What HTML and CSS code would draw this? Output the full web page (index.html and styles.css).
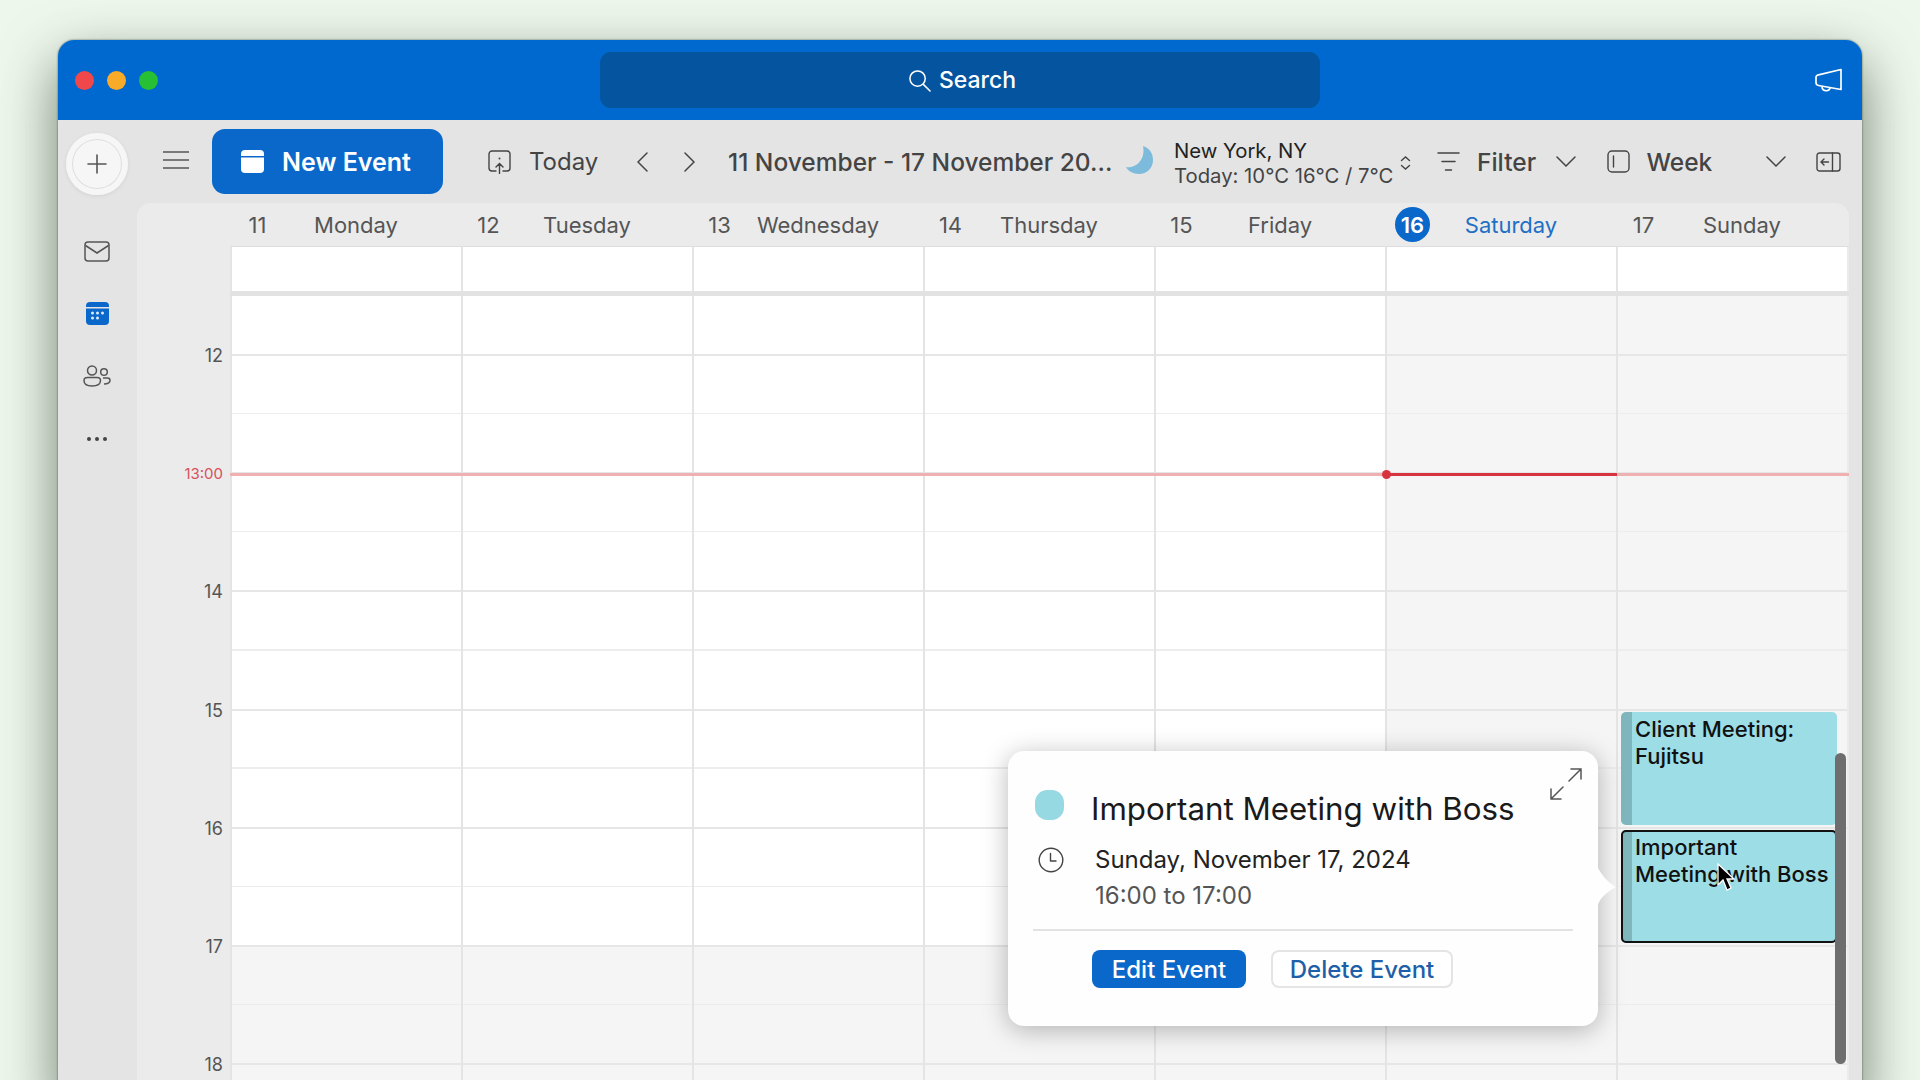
FILE: index.html
```html
<!DOCTYPE html>
<html lang="en">
<head>
    <meta charset="UTF-8">
    <title>Calendar</title>
    <link rel="stylesheet" href="styles.css">
</head>
<body>
    <div class="window">
        <header class="titlebar">
            <div class="lights">
                <span class="light red"></span>
                <span class="light yellow"></span>
                <span class="light green"></span>
            </div>
            <div class="search">
                <svg width="23" height="23" viewBox="0 0 24 24" fill="none" stroke="#fff" stroke-width="1.6" stroke-linecap="round"><circle cx="10" cy="10" r="8"/><path d="M16 16l7 7"/></svg>
                <span>Search</span>
            </div>
            <div class="feedback">
                <svg width="28" height="24" viewBox="0 0 28 24" fill="none" stroke="#fff" stroke-width="1.7" stroke-linejoin="round"><path d="M26 1.500v20L3.500 17.500Q1 17 1 14.500v-5Q1 7.500 3.500 6.800z"/><path d="M7 18.500a4.200 4.200 0 0 0 8.200 1.300"/></svg>
            </div>
        </header>
        <div class="main">
            <aside class="rail">
                <button class="plus"><svg width="24" height="24" viewBox="0 0 24 24" stroke="#555" stroke-width="1.6" stroke-linecap="round"><path d="M12 3v18M3 12h18"/></svg></button>
                <nav class="rail-nav">
                    <div class="rail-item"><svg width="26" height="21" viewBox="0 0 26 21" fill="none" stroke="#555" stroke-width="1.5"><rect x="1" y="1" width="24" height="19" rx="3"/><path d="M1.500 4.500L13 12l11.500-7.500"/></svg></div>
                    <div class="rail-item"><svg width="23" height="23" viewBox="0 0 23 23"><rect width="23" height="23" rx="4" fill="#0a68cb"/><rect x="0" y="5" width="23" height="1.500" fill="#e4e4e4"/><g fill="#dcebf8"><circle cx="6.500" cy="11" r="1.500"/><circle cx="11.500" cy="11" r="1.500"/><circle cx="16.500" cy="11" r="1.500"/><circle cx="6.500" cy="16" r="1.500"/><circle cx="11.500" cy="16" r="1.500"/></g></svg></div>
                    <div class="rail-item"><svg width="28" height="22" viewBox="0 0 28 22" fill="none" stroke="#555" stroke-width="1.5"><circle cx="9" cy="5.500" r="4.500"/><path d="M4.500 12.500h9.500q3.500 0 3.500 3 0 5.500-8.500 5.500-8 0-8-5.500 0-3 3.500-3z"/><circle cx="21" cy="7" r="3.300"/><path d="M20 13h4.500q2.500 0 2.500 2.300 0 3.700-6 3.700"/></svg></div>
                    <div class="rail-item"><svg width="22" height="6" viewBox="0 0 22 6" fill="#444"><circle cx="3" cy="3" r="2"/><circle cx="11" cy="3" r="2"/><circle cx="19" cy="3" r="2"/></svg></div>
                </nav>
            </aside>
            <div class="content">
                <div class="toolbar">
                    <svg class="hamburger" width="26" height="20" viewBox="0 0 26 20" stroke="#555" stroke-width="1.500"><path d="M0 2h26M0 10h26M0 18h26"/></svg>
                    <button class="new-event">
                        <svg width="23" height="23" viewBox="0 0 23 23"><path d="M0 6V4a4 4 0 0 1 4-4h15a4 4 0 0 1 4 4v2z" fill="#fff"/><path d="M0 7.500h23V19a4 4 0 0 1-4 4H4a4 4 0 0 1-4-4z" fill="#fff"/></svg>
                        <span>New Event</span>
                    </button>
                    <div class="tool today">
                        <svg width="23" height="24" viewBox="0 0 23 24" fill="none" stroke="#444" stroke-width="1.400" stroke-linecap="round"><path d="M8 21H4a3 3 0 0 1-3-3V4a3 3 0 0 1 3-3h15a3 3 0 0 1 3 3v14a3 3 0 0 1-3 3h-4"/><path d="M11.500 23.500V14M8 17l3.500-3.500L15 17"/><path d="M11.500 8.500v.1" stroke-width="2"/></svg>
                        <span>Today</span>
                    </div>
                    <svg class="chev-left" width="11" height="20" viewBox="0 0 11 20" fill="none" stroke="#444" stroke-width="1.500" stroke-linecap="round"><path d="M10 1L1 10l9 9"/></svg>
                    <svg class="chev-right" width="11" height="20" viewBox="0 0 11 20" fill="none" stroke="#444" stroke-width="1.500" stroke-linecap="round"><path d="M1 1l9 9-9 9"/></svg>
                    <div class="range">11 November - 17 November 20...</div>
                    <svg class="moon" width="27" height="28" viewBox="0 0 27 28"><path d="M17 0C24 2 27 8 27 14c0 8-6 14-14 14C7 28 2 25 0 21c10 2 20-8 17-21z" fill="#7dbbdc"/></svg>
                    <div class="weather">
                        <div class="weather-city">New York, NY</div>
                        <div class="weather-temp">Today: 10°C 16°C / 7°C</div>
                    </div>
                    <svg class="updown" width="11" height="14" viewBox="0 0 11 14" fill="none" stroke="#444" stroke-width="1.400" stroke-linecap="round"><path d="M1.500 4.500l4-3.500 4 3.500M1.500 9.500l4 3.500 4-3.500"/></svg>
                    <svg class="filter-icon" width="23" height="21" viewBox="0 0 23 21" stroke="#444" stroke-width="1.500" stroke-linecap="round"><path d="M1 2h21M5 10.500h13M8.500 19h6"/></svg>
                    <span class="tool-label filter">Filter</span>
                    <svg class="chev-down filter-chev" width="20" height="11" viewBox="0 0 20 11" fill="none" stroke="#444" stroke-width="1.500" stroke-linecap="round"><path d="M1 1l9 9 9-9"/></svg>
                    <svg class="week-icon" width="23" height="23" viewBox="0 0 23 23" fill="none" stroke="#444" stroke-width="1.400" stroke-linecap="round"><rect x="1" y="1" width="21" height="21" rx="4"/><path d="M6.500 6v11"/></svg>
                    <span class="tool-label week">Week</span>
                    <svg class="chev-down week-chev" width="20" height="11" viewBox="0 0 20 11" fill="none" stroke="#444" stroke-width="1.500" stroke-linecap="round"><path d="M1 1l9 9 9-9"/></svg>
                    <svg class="panel-icon" width="25" height="20" viewBox="0 0 25 20" fill="none" stroke="#444" stroke-width="1.400" stroke-linecap="round"><rect x="1" y="1" width="23" height="18" rx="2.500"/><path d="M16.500 1v18M12.500 10H5M8 7l-3 3 3 3"/></svg>
                </div>
                <section class="panel">
                    <div class="week-head">
                        <div class="head-day"><span>11</span><span>Monday</span></div>
                        <div class="head-day"><span>12</span><span>Tuesday</span></div>
                        <div class="head-day"><span>13</span><span>Wednesday</span></div>
                        <div class="head-day"><span>14</span><span>Thursday</span></div>
                        <div class="head-day"><span>15</span><span>Friday</span></div>
                        <div class="head-day current"><span><b class="today-badge">16</b></span><span>Saturday</span></div>
                        <div class="head-day"><span>17</span><span>Sunday</span></div>
                    </div>
                    <div class="all-day">
                        <div></div><div></div><div></div><div></div><div></div><div></div><div></div>
                    </div>
                    <div class="body">
                        <div class="hours">
                            <div class="hour">12</div>
                            <div class="hour now">13:00</div>
                            <div class="hour">14</div>
                            <div class="hour">15</div>
                            <div class="hour">16</div>
                            <div class="hour">17</div>
                            <div class="hour">18</div>
                        </div>
                        <div class="days">
                            <div class="day"></div>
                            <div class="day"></div>
                            <div class="day"></div>
                            <div class="day"></div>
                            <div class="day"></div>
                            <div class="day weekend"></div>
                            <div class="day weekend">
                                <div class="event client">Client Meeting:<br>Fujitsu</div>
                                <div class="event selected">Important<br>Meeting with Boss</div>
                            </div>
                            <div class="now-line"><div class="now-today"></div></div>
                            <div class="scrollbar"></div>
                            <div class="popover">
                                <svg class="expand" width="34" height="34" viewBox="0 0 34 34" fill="none" stroke="#555" stroke-width="1.500" stroke-linecap="round"><path d="M20 14L32 2M22 2h10v10M14 20L2 32M2 22v10h10"/></svg>
                                <div class="pop-title">
                                    <span class="pop-dot"></span>
                                    <span>Important Meeting with Boss</span>
                                </div>
                                <div class="pop-date">
                                    <svg width="26" height="26" viewBox="0 0 26 26" fill="none" stroke="#444" stroke-width="1.400" stroke-linecap="round" stroke-linejoin="round"><circle cx="13" cy="13" r="11.800"/><path d="M12.500 6.500V14H18"/></svg>
                                    <span>Sunday, November 17, 2024</span>
                                </div>
                                <div class="pop-time">16:00 to 17:00</div>
                                <div class="pop-rule"></div>
                                <div class="pop-actions">
                                    <button class="btn-edit">Edit Event</button>
                                    <button class="btn-delete">Delete Event</button>
                                </div>
                                <svg class="pop-arrow" width="20" height="42" viewBox="0 0 20 42"><path d="M0 0C4 8 10 16 19 21 10 26 2 32 0 42z" fill="#fefefe"/></svg>
                            </div>
                            <svg class="cursor" width="19" height="29" viewBox="0 0 19 29"><path d="M2 1v21l5-5 4 10 4-2-4-9h7z" fill="#000" stroke="#fff" stroke-width="1.300"/></svg>
                        </div>
                    </div>
                </section>
            </div>
        </div>
    </div>
</body>
</html>
```

FILE: styles.css
```css
* {
    box-sizing: border-box;
}
body {
    margin: 0;
    height: 1080px;
    overflow: hidden;
    background-color: #eef7ec;
    font-family: Inter, "Liberation Sans", sans-serif;
    color: #444;
}
button {
    font-family: inherit;
    border: none;
}
svg {
    display: block;
    flex: none;
}

.window {
    width: 1804px;
    height: 1060px;
    margin: 40px 0 0 58px;
    display: flex;
    flex-direction: column;
    background: #e4e4e4;
    border-radius: 16px 16px 0 0;
    box-shadow: 0 22px 56px rgba(30, 50, 30, 0.62), 0 0 2px rgba(40, 60, 40, 0.8);
    overflow: hidden;
}

/* title bar */
.titlebar {
    height: 80px;
    flex: none;
    display: grid;
    grid-template-columns: 1fr 720px 1fr;
    align-items: center;
    background: #0069cf;
}
.lights {
    display: flex;
    gap: 13px;
    padding-left: 17px;
}
.light {
    width: 19px;
    height: 19px;
    border-radius: 50%;
}
.red { background: #f0484a; }
.yellow { background: #f8ab28; }
.green { background: #27bf33; }
.search {
    height: 56px;
    display: flex;
    align-items: center;
    justify-content: center;
    gap: 8px;
    padding-left: 4px;
    border-radius: 11px;
    background: #05549f;
    color: #fff;
    font-size: 23px;
    font-weight: 500;
}
.feedback {
    display: flex;
    justify-content: flex-end;
    padding-right: 19px;
}

.main {
    flex: 1;
    display: flex;
    min-height: 0;
}

/* left rail */
.rail {
    width: 79px;
    flex: none;
    padding-top: 13px;
}
.plus {
    width: 62px;
    height: 62px;
    margin-left: 8px;
    display: flex;
    align-items: center;
    justify-content: center;
    border-radius: 50%;
    background: #f6f6f6;
    box-shadow: inset 0 0 0 6px #f6f6f6, inset 0 0 0 7px #dedede, 0 1px 4px rgba(0, 0, 0, 0.08);
}
.rail-nav {
    margin-top: 25px;
    padding-right: 1px;
}
.rail-item {
    height: 62.500px;
    display: flex;
    align-items: center;
    justify-content: center;
}

.content {
    width: 1712px;
    display: flex;
    flex-direction: column;
}

/* toolbar */
.toolbar {
    height: 83px;
    flex: none;
    display: flex;
    align-items: center;
    font-size: 24.500px;
    color: #444;
}
.hamburger { margin-left: 26px; margin-top: -3px; }
.new-event {
    width: 231px;
    height: 65px;
    margin: 0 0 0 23px;
    padding-left: 29px;
    display: flex;
    align-items: center;
    gap: 18px;
    border-radius: 13px;
    background: #0a68cb;
    color: #fff;
    font-size: 25px;
    font-weight: 600;
}
.tool {
    display: flex;
    align-items: center;
}
.today { margin-left: 45px; width: 109px; gap: 18px; font-size: 24px; }
.chev-left { margin-left: 40px; }
.chev-right { margin-left: 36px; }
.range {
    width: 384px;
    margin-left: 33px;
    white-space: nowrap;
    font-weight: 500;
}
.moon { margin-left: 14px; margin-top: -3px; }
.weather {
    width: 226px;
    margin: 2px 0 0 21px;
    font-size: 20.300px;
    line-height: 25px;
    white-space: nowrap;
}
.weather-city { color: #222; }
.updown { margin-top: 2px; }
.filter-icon { margin-left: 26px; }
.tool-label { font-weight: 500; }
.filter { width: 58px; margin-left: 17px; }
.filter-chev { margin-left: 21px; }
.week-icon { margin-left: 31px; }
.week { width: 64px; margin-left: 16.500px; }
.week-chev { margin-left: 55px; }
.panel-icon { margin-left: 30px; }

/* calendar panel */
.panel {
    flex: 1;
    min-height: 0;
    background: #ebebeb;
    border-radius: 14px 14px 0 0;
}
.week-head {
    height: 43px;
    margin-left: 94px;
    display: flex;
}
.head-day {
    width: 231px;
    display: grid;
    grid-template-columns: 53px 144px;
    align-items: center;
    text-align: center;
    font-size: 22px;
    color: #555;
}
.head-day.current { color: #1f6fc4; }
.today-badge {
    display: flex;
    align-items: center;
    justify-content: center;
    width: 35px;
    height: 35px;
    margin: 0 auto;
    border-radius: 50%;
    background: #0a68cb;
    color: #fff;
    font-weight: 600;
}
.all-day {
    height: 50px;
    margin-left: 93px;
    display: flex;
    border-top: 1px solid #dedede;
    border-bottom: 5px solid #e2e2e2;
}
.all-day div {
    width: 231px;
    background: #fff;
    border-left: 2px solid #e4e4e4;
}
.body {
    display: flex;
    height: 800px;
    overflow: hidden;
}
.hours {
    width: 93px;
    flex: none;
}
.hour {
    height: 118.200px;
    padding: 1px 7px 0 0;
    display: flex;
    align-items: center;
    justify-content: flex-end;
    font-size: 18px;
    color: #555;
}
.hour.now {
    padding-top: 0;
    font-size: 15px;
    color: #d9505a;
}

.days {
    flex: 1;
    display: flex;
    position: relative;
}
.day {
    width: 231px;
    position: relative;
    border-left: 2px solid #e4e4e4;
    background-color: #fff;
    background-image:
        repeating-linear-gradient(to bottom, transparent 0, transparent 58px, #e6e6e6 58px, #e6e6e6 60px, transparent 60px, transparent 116.800px, #ededed 116.800px, #ededed 118.200px),
        linear-gradient(to bottom, transparent 650px, #f5f5f5 650px);
}
.day.weekend {
    background-image:
        repeating-linear-gradient(to bottom, transparent 0, transparent 58px, #e6e6e6 58px, #e6e6e6 60px, transparent 60px, transparent 116.800px, #ededed 116.800px, #ededed 118.200px),
        linear-gradient(to bottom, #f5f5f5, #f5f5f5);
}

/* things lying over the grid */
.event {
    position: absolute;
    left: 3px;
    width: 216px;
    height: 113px;
    padding: 4px 0 0 3px;
    border-left: 11px solid #7fb6bd;
    border-radius: 5px;
    background: #9cdde6;
    font-size: 22px;
    line-height: 27px;
    font-weight: 500;
    white-space: nowrap;
    color: #111;
}
.client { top: 416px; }
.selected {
    top: 534px;
    outline: 2px solid #111;
    outline-offset: -2px;
}
.now-line {
    position: absolute;
    left: 0;
    right: 0;
    top: 177px;
    height: 3px;
    background: #eeb0b0;
}
.now-today {
    position: absolute;
    left: 1156px;
    width: 231px;
    height: 3px;
    background: #d8343f;
}
.now-today::before {
    content: "";
    position: absolute;
    left: -4px;
    top: -3px;
    width: 9px;
    height: 9px;
    border-radius: 50%;
    background: #d8343f;
}
.scrollbar {
    position: absolute;
    left: 1605px;
    top: 457px;
    width: 11px;
    height: 311px;
    border-radius: 6px;
    background: #6e6e6e;
}
.popover {
    position: absolute;
    left: 778px;
    top: 455px;
    width: 590px;
    height: 275px;
    padding-top: 36px;
    background: #fefefe;
    border-radius: 16px;
    box-shadow: 0 4px 26px rgba(0, 0, 0, 0.28);
}
.expand {
    position: absolute;
    right: 15px;
    top: 16px;
}
.pop-title {
    display: flex;
    align-items: center;
    gap: 27px;
    padding-left: 27px;
    font-size: 31.300px;
    line-height: 44px;
    color: #1a1a1a;
}
.pop-dot {
    width: 29px;
    height: 30px;
    margin-top: -8px;
    border-radius: 42%;
    background: #96d9e2;
}
.pop-date {
    display: flex;
    align-items: center;
    gap: 31px;
    margin-top: 11px;
    padding-left: 30px;
    font-size: 24px;
    line-height: 36px;
    color: #222;
}
.pop-time {
    padding-left: 87px;
    font-size: 24px;
    line-height: 36px;
    color: #555;
}
.pop-rule {
    height: 2px;
    margin: 15px 25px 0;
    background: #e2e2e2;
}
.pop-actions {
    display: flex;
    gap: 25px;
    margin-top: 19px;
    padding-left: 84px;
}
.pop-actions button {
    height: 38px;
    border-radius: 8px;
    font-size: 24px;
    font-weight: 500;
}
.btn-edit {
    width: 154px;
    background: #0a68cb;
    color: #fff;
}
.btn-delete {
    width: 182px;
    background: #fff;
    box-shadow: inset 0 0 0 2px #e4e4e4;
    color: #1f5fa8;
}
.pop-arrow {
    position: absolute;
    left: 589px;
    top: 115px;
}
.cursor {
    position: absolute;
    left: 1486px;
    top: 567px;
}
```
